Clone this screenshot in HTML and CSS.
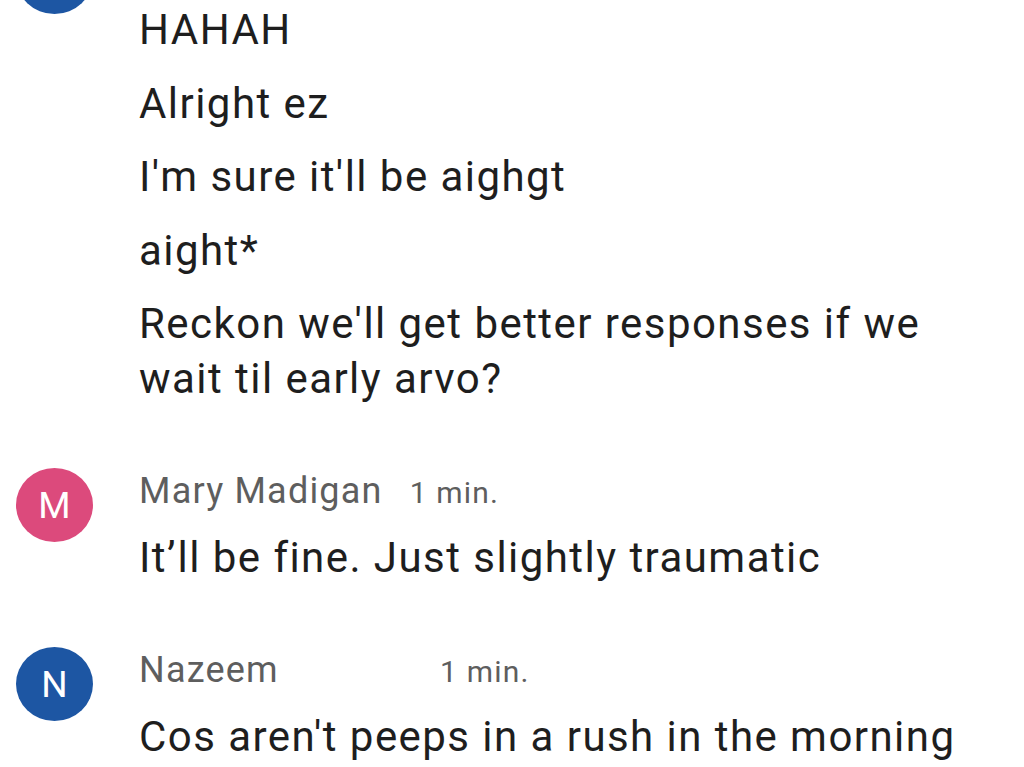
FILE: index.html
```html
<!DOCTYPE html>
<html lang="en">
<head>
<meta charset="utf-8">
<title>Chat</title>
<link rel="stylesheet" href="styles.css">
</head>
<body>
<main class="chat">
  <section class="group">
    <div class="avatar-col"><div class="avatar avatar-blue" aria-label="N"></div></div>
    <div class="content">
      <div class="meta"></div>
      <p class="msg">HAHAH</p>
      <p class="msg">Alright ez</p>
      <p class="msg">I'm sure it'll be aighgt</p>
      <p class="msg">aight*</p>
      <p class="msg">Reckon we'll get better responses if we wait til early arvo?</p>
    </div>
  </section>
  <section class="group">
    <div class="avatar-col"><div class="avatar avatar-pink">M</div></div>
    <div class="content">
      <div class="meta"><span class="name">Mary Madigan</span><span class="time">1 min.</span></div>
      <p class="msg">It’ll be fine. Just slightly traumatic</p>
    </div>
  </section>
  <section class="group">
    <div class="avatar-col"><div class="avatar avatar-blue">N</div></div>
    <div class="content">
      <div class="meta meta-wide"><span class="name">Nazeem</span><span class="time">1 min.</span></div>
      <p class="msg">Cos aren't peeps in a rush in the morning</p>
    </div>
  </section>
</main>
</body>
</html>
```
FILE: styles.css
```css
html, body {
  margin: 0;
  padding: 0;
  background: #ffffff;
}
body {
  font-family: Roboto, "Liberation Sans", sans-serif;
  color: #1e1e1e;
  overflow: hidden;
  height: 767px;
}
.chat {
  margin-top: -60px;
  display: flex;
  flex-direction: column;
  gap: 62px;
}
.group {
  display: flex;
  align-items: flex-start;
}
.avatar-col {
  width: 139px;
  flex: none;
  padding-left: 16px;
  box-sizing: border-box;
}
.avatar {
  width: 77px;
  height: 74px;
  border-radius: 50%;
  display: flex;
  align-items: center;
  justify-content: center;
  color: #ffffff;
  font-size: 37px;
  line-height: 1;
}
.avatar-blue { background: #1d56a3; }
.avatar-pink { background: #dc4a7c; }
.content {
  flex: 1;
  min-width: 0;
  padding-right: 40px;
}
.meta {
  display: flex;
  align-items: baseline;
  height: 46px;
  line-height: 46px;
  gap: 27px;
  margin-bottom: 16px;
  color: #5e5e5e;
}
.name {
  font-size: 36px;
  letter-spacing: 1.2px;
}
.meta-wide .name {
  min-width: 274px;
}
.time {
  font-size: 30px;
  letter-spacing: 1.2px;
}
.msg {
  margin: 0 0 18.5px;
  font-size: 42px;
  letter-spacing: 1.45px;
  line-height: 55px;
}
.msg:last-child {
  margin-bottom: 0;
}
```
